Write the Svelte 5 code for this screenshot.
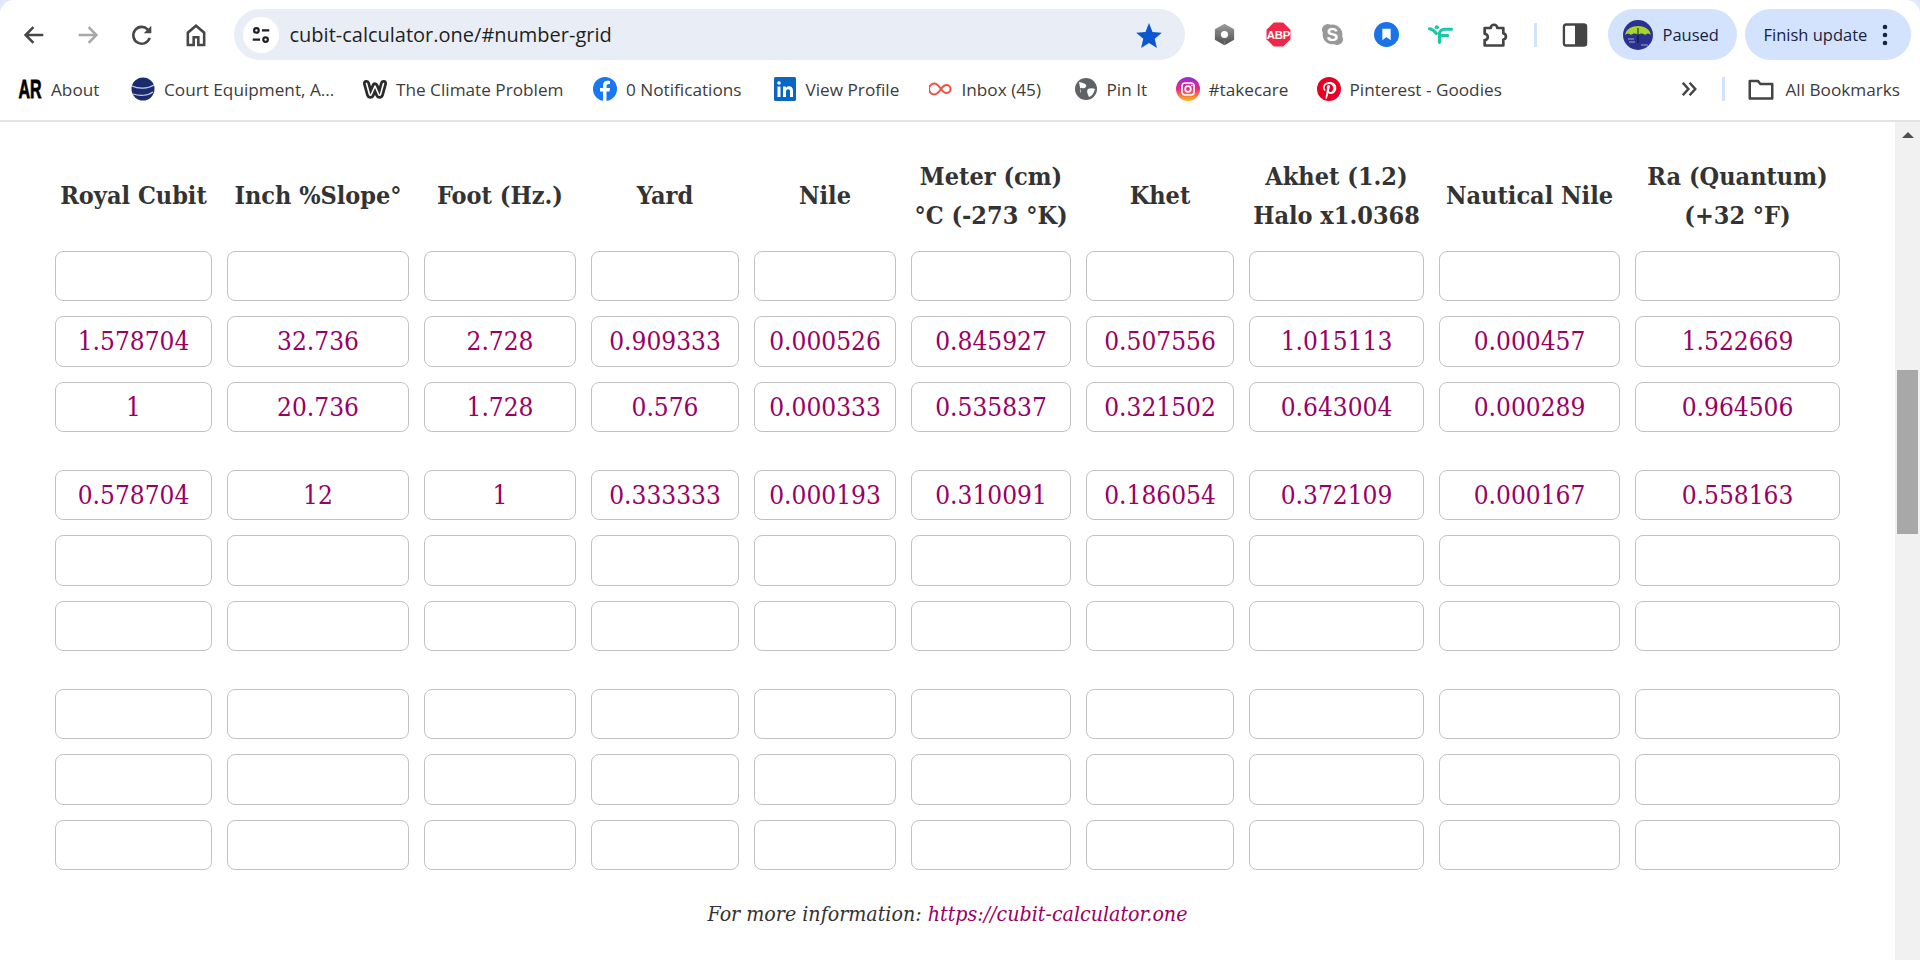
<script lang="ts">
  // fixed sizes of the number grid, taken from the table on the page
  const heads = [
    ['Royal Cubit'],
    ['Inch %Slope°'],
    ['Foot (Hz.)'],
    ['Yard'],
    ['Nile'],
    ['Meter (cm)', '°C (-273 °K)'],
    ['Khet'],
    ['Akhet (1.2)', 'Halo x1.0368'],
    ['Nautical Nile'],
    ['Ra (Quantum)', '(+32 °F)']
  ]
  const empty = Array(10).fill('')
  const rows = [
    { cells: empty },
    { cells: ['1.578704', '32.736', '2.728', '0.909333', '0.000526', '0.845927', '0.507556', '1.015113', '0.000457', '1.522669'] },
    { cells: ['1', '20.736', '1.728', '0.576', '0.000333', '0.535837', '0.321502', '0.643004', '0.000289', '0.964506'], sep: true },
    { cells: ['0.578704', '12', '1', '0.333333', '0.000193', '0.310091', '0.186054', '0.372109', '0.000167', '0.558163'] },
    { cells: empty },
    { cells: empty, sep: true },
    { cells: empty },
    { cells: empty },
    { cells: empty }
  ]
  const marks = [
    { name: 'About', w: 113 },
    { name: 'Court Equipment, A...', w: 232 },
    { name: 'The Climate Problem', w: 230 },
    { name: '0 Notifications', w: 179.5 },
    { name: 'View Profile', w: 156 },
    { name: 'Inbox (45)', w: 145 },
    { name: 'Pin It', w: 102 },
    { name: '#takecare', w: 141 },
    { name: 'Pinterest - Goodies', w: 189 }
  ]
</script>

<div class="browser">
  <header class="chrome">
    <div class="toolbar">
      <div class="nav">
        <svg viewBox="0 0 24 24" class="ic"><path d="M20 12H5M11.5 5.2 4.8 12l6.7 6.8" fill="none" stroke="#474747" stroke-width="2.2"/></svg>
        <svg viewBox="0 0 24 24" class="ic"><path d="M4 12h15M12.5 5.2l6.7 6.8-6.7 6.8" fill="none" stroke="#a8a8a8" stroke-width="2.2"/></svg>
        <svg viewBox="0 0 24 24" class="ic"><path d="M18.6 14.500A7.200 7.200 0 1 1 17 7.300L19 9.500" fill="none" stroke="#474747" stroke-width="2.200"/><path d="M20 4v6.500h-6.500z" fill="#474747"/></svg>
        <svg viewBox="0 0 24 24" class="ic"><path d="M5 20.500V10l7-6 7 6v10.500h-5v-6.500h-4v6.500z" fill="none" stroke="#474747" stroke-width="2.200"/></svg>
      </div>
      <div class="omnibox">
        <span class="tune">
          <svg viewBox="0 0 24 24" width="22" height="22"><g fill="none" stroke="#1f1f1f" stroke-width="2.400"><circle cx="7" cy="7" r="2.500"/><path d="M13 7h8M3 17h8"/><circle cx="17" cy="17" r="2.500"/></g></svg>
        </span>
        <span class="url">cubit-calculator.one/#number-grid</span>
        <svg class="star" viewBox="0 0 24 24" width="28" height="28"><path d="M12 1.800l3 7.600 8 .6-6.100 5.200 1.900 7.900L12 18.800l-6.800 4.300 1.900-7.900L1 10l8-.6z" fill="#0b57d0"/></svg>
      </div>
      <div class="exts">
        <svg viewBox="0 0 24 24" class="ext">
          <defs><linearGradient id="hexg" x1="0" y1="0" x2="0" y2="1"><stop offset="0" stop-color="#9a9a9a"/><stop offset="1" stop-color="#4f4f4f"/></linearGradient></defs>
          <path d="M12 2.500l8.500 4.800v9.400L12 21.500l-8.500-4.800V7.300z" fill="url(#hexg)" stroke="url(#hexg)" stroke-width="1.500" stroke-linejoin="round"/>
          <path d="M4 8l5 3M12 18v4" stroke="#7a7a7a" stroke-width="1.500"/>
          <circle cx="12" cy="12" r="3.400" fill="#fff"/>
        </svg>
        <svg viewBox="0 0 24 24" class="ext"><path d="M7.500 .5h9l7 7v9l-7 7h-9l-7-7v-9z" fill="#f0264a"/><text x="12" y="16" class="abp">ABP</text></svg>
        <svg viewBox="0 0 24 24" class="ext"><path d="M12 2.500a9.500 9.500 0 0 1 9.300 11.300 5.500 5.500 0 0 1-7.500 7.500A9.500 9.500 0 0 1 2.700 10.200 5.500 5.500 0 0 1 10.200 2.700z" fill="#999"/><text x="12" y="18" class="skype">S</text></svg>
        <svg viewBox="0 0 24 24" class="ext"><circle cx="12" cy="12" r="12" fill="#1a73e8"/><path d="M8 6.500h8v11l-4-3-4 3z" fill="#fff"/></svg>
        <svg viewBox="0 0 24 24" class="ext"><g fill="none" stroke="#17c9a5" stroke-width="3" stroke-linecap="round"><path d="M1.500 6.500c3 .5 5 2.500 6.500 4.500M11 19.500V12c0-3 2-5 5-5h6.500M13 13h6"/></g><circle cx="8.500" cy="5" r="2" fill="#17c9a5"/></svg>
        <svg viewBox="0 0 24 24" class="ext puzzle"><path d="M4 6h5.200a2.800 2.800 0 0 1 5.600 0H20v4.600a2.700 2.700 0 0 1 0 5.300V21H4v-4.600a2.700 2.700 0 0 0 0-5.400z" fill="none" stroke="#444" stroke-width="2.300" stroke-linejoin="round"/></svg>
      </div>
      <i class="bar"></i>
      <svg viewBox="0 0 24 24" class="panel"><rect x="2.500" y="3" width="19" height="18" rx="2" fill="none" stroke="#444" stroke-width="2"/><rect x="12" y="3" width="10" height="18" fill="#444"/></svg>
      <div class="pill paused">
        <svg viewBox="0 0 30 30" width="30" height="30" class="avatar">
          <circle cx="15" cy="15" r="15" fill="#2b3190"/>
          <path d="M2 15C4 3 26 3 28 15c-2-2-4-2-6 0-2-2-5-2-7 0-2-2-5-2-7 0-2-2-4-2-6 0z" fill="#a8d52c"/>
          <path d="M15 8v15" stroke="#111" stroke-width="1"/>
          <path d="M5 19h6M6 22h6M18 25h7" stroke="#aab" stroke-width="1"/>
        </svg>
        <span>Paused</span>
      </div>
      <div class="pill update">
        <span>Finish update</span>
        <svg viewBox="0 0 6 24" width="6" height="24"><circle cx="3" cy="4" r="2.300" fill="#17233f"/><circle cx="3" cy="12" r="2.300" fill="#17233f"/><circle cx="3" cy="20" r="2.300" fill="#17233f"/></svg>
      </div>
    </div>
    <div class="bookmarks">
      {#each marks as m, i}
        <span class="mark" style="width:{m.w}px">
          <svg viewBox="0 0 24 24" width="24" height="24">
            {#if i === 0}
              <text class="ar" transform="translate(.5 20.500) scale(.8 1.300)">AR</text>
            {:else if i === 1}
              <circle cx="12" cy="12" r="11.500" fill="#1c2a6e"/><path d="M1 9c6 3 16 3 22-1M2 17c6 2 15 2 20-2" stroke="#c6cde8" fill="none" stroke-width="1.200"/>
            {:else if i === 2}
              <g fill="none" stroke-linecap="round" stroke-linejoin="round"><path d="M3.500 6.500l3 11c.4 1 1.400 1 1.800 0L12 9l3.700 8.500c.4 1 1.400 1 1.800 0l3-11" stroke="#2b2b2b" stroke-width="7"/><path d="M3.500 6.500l3 11c.4 1 1.400 1 1.800 0L12 9l3.700 8.500c.4 1 1.400 1 1.800 0l3-11" stroke="#fff" stroke-width="1.600"/></g>
            {:else if i === 3}
              <circle cx="12" cy="12" r="12" fill="#1877f2"/><path d="M13.500 24v-9.500h3l.5-3.500h-3.500V9c0-1 .5-2 2-2H17V4c-3.500-.6-7 0-7 4.500V11H7v3.500h3V24z" fill="#fff"/>
            {:else if i === 4}
              <rect x="1" y="0" width="22" height="24" rx="1.500" fill="#0a66c2"/><path d="M4.500 9.500h3V20h-3zM10 9.500h3V11c1.500-2.500 7-2.500 7 2.500V20h-3v-6c0-2.500-4-2.500-4 .5V20h-3z" fill="#fff"/><circle cx="6" cy="6" r="1.800" fill="#fff"/>
            {:else if i === 5}
              <path d="M12 12c-2.500-3.500-4.500-5.500-6.500-5.500a5.500 5.500 0 0 0 0 11C7.500 17.500 9.500 15.500 12 12c2-2.800 3.500-4 5.500-4a4 4 0 0 1 0 8c-2 0-3.500-1.200-5.500-4z" fill="none" stroke="#f0503c" stroke-width="2"/>
            {:else if i === 6}
              <circle cx="12" cy="12" r="11" fill="#5f6368"/><path d="M5 5c3 1 6 1 7 3s-2 4-4 3-3 3-1 5M14 12c2-1 5-1 7 0-1 4-3 7-6 8-1-3-3-5-1-8z" fill="#fff"/>
            {:else if i === 7}
              <rect x="0" y="0" width="24" height="24" rx="12" fill="url(#insta)"/><rect x="6" y="6" width="12" height="12" rx="3" fill="none" stroke="#fff" stroke-width="1.700"/><circle cx="12" cy="12" r="2.800" fill="none" stroke="#fff" stroke-width="1.700"/><circle cx="15.700" cy="8.300" r=".9" fill="#fff"/>
              <defs><linearGradient id="insta" x1="0" y1="0" x2="0" y2="1"><stop offset="0" stop-color="#8a2fe0"/><stop offset=".5" stop-color="#ee2a7b"/><stop offset="1" stop-color="#fdb913"/></linearGradient></defs>
            {:else}
              <circle cx="12" cy="12" r="12" fill="#e60023"/><path d="M12.500 5c-4 0-6.500 2.500-6.500 5.500 0 1.500.8 3 2 3.500.5-.5.5-1 .3-1.500-1.600-2.500.2-5.500 3.800-5.500 5.500 0 5 8 1.400 8-1 0-1.800-.8-1.500-1.800l1-3.500c.3-2-2.800-2.400-3.200.6-.1.800.2 1.400.2 1.400L8.800 19c-.2 1-.1 2.500 0 3.500 1-1 1.600-2.500 2-4l.6-2.500c1.500 2 6.600 1.500 7.800-3.500C20 7.500 17 5 12.500 5z" fill="#fff"/>
            {/if}
          </svg>
          <span>{m.name}</span>
        </span>
      {/each}
      <svg viewBox="0 0 16 16" width="20" height="20" class="more"><path d="M3 3l4.500 5L3 13M8.500 3l4.500 5-4.500 5" fill="none" stroke="#444" stroke-width="2"/></svg>
      <i class="bar small"></i>
      <span class="all">
        <svg viewBox="0 0 24 24" width="30" height="30"><path d="M3 5.500h6.500l2 2.500H21v11.500H3z" fill="none" stroke="#444" stroke-width="2" stroke-linejoin="round"/></svg>
        <span>All Bookmarks</span>
      </span>
    </div>
  </header>

  <div class="viewport">
    <main>
      <div class="row heads">
        {#each heads as h}
          <div class="head">
            {#each h as line}<div>{line}</div>{/each}
          </div>
        {/each}
      </div>
      {#each rows as r}
        <div class="row" class:sep={r.sep}>
          {#each r.cells as c}
            <input type="text" value={c} />
          {/each}
        </div>
      {/each}
      <p class="info">For more information: <a href="#number-grid">https://cubit-calculator.one</a></p>
    </main>
    <aside class="scroll">
      <svg viewBox="0 0 12 6" width="12" height="6" class="up"><path d="M6 0l6 6H0z" fill="#505050"/></svg>
      <div class="thumb"></div>
    </aside>
  </div>
</div>

<style>
  :global(body) { margin: 0; background: #dfe9fb; overflow: hidden; }
  .browser { width: 1920px; height: 960px; display: flex; flex-direction: column; font-family: "Open Sans", "Noto Sans", sans-serif; }
  .chrome { background: #fff; border-radius: 14px 14px 0 0; border-bottom: 2px solid #e3e3e3; height: 120px; flex: none; }
  .toolbar { height: 69px; display: flex; align-items: center; padding-left: 20px; }
  .nav { display: flex; gap: 26px; width: 214px; flex: none; }
  .ic { width: 28px; height: 28px; }
  .omnibox { width: 951px; height: 51px; border-radius: 26px; background: #e9eef6; display: flex; align-items: center; flex: none; padding-left: 9px; box-sizing: border-box; }
  .tune { width: 36px; height: 36px; border-radius: 50%; background: #fff; display: flex; align-items: center; justify-content: center; }
  .url { font-size: 20px; color: #1f1f1f; margin-left: 10.500px; flex: 1; }
  .star { margin-right: 22px; }
  .exts { display: flex; gap: 29px; margin-left: 26.500px; align-items: center; }
  .ext { width: 25px; height: 25px; }
  .puzzle { width: 28px; height: 28px; margin: 0 -1.500px; }
  .abp { font: 700 11px "Liberation Sans", sans-serif; letter-spacing: -.2px; fill: #fff; text-anchor: middle; }
  .skype { font: 700 17px "Liberation Sans", sans-serif; fill: #fff; text-anchor: middle; }
  .bar { width: 3px; height: 24px; background: #d3e3fd; margin-left: 27px; flex: none; }
  .panel { width: 28px; height: 28px; margin-left: 24.500px; }
  .pill { height: 51px; border-radius: 26px; background: #d3e3fd; display: flex; align-items: center; box-sizing: border-box; font-size: 16.500px; color: #17233f; flex: none; }
  .paused { width: 129px; margin-left: 18.500px; padding-left: 15px; gap: 10px; }
  .avatar { flex: none; }
  .update { width: 166px; margin-left: 8px; padding-left: 19px; gap: 15px; }
  .bookmarks { height: 40px; display: flex; align-items: center; padding-left: 18px; font-size: 17.200px; color: #3c3c3c; }
  .mark { display: flex; align-items: center; gap: 9px; flex: none; }
  .ar { font: 700 20px "Liberation Sans", sans-serif; fill: #000; stroke: #000; stroke-width: .6px; }
  .more { margin-left: 173px; flex: none; }
  .bar.small { margin-left: 23px; }
  .all { display: flex; align-items: center; gap: 10px; margin-left: 21px; }
  .viewport { flex: 1; background: #fff; display: flex; min-height: 0; }
  main { width: 1895px; flex: none; padding: 27.600px 0 0 55px; box-sizing: border-box; font-family: "DejaVu Serif Condensed", "DejaVu Serif", serif; }
  .row { display: grid; grid-template-columns: 157px 182px 152px 148px 142px 160px 148px 175px 181px 205px; column-gap: 15px; margin-bottom: 15px; }
  .row.sep { margin-bottom: 37.500px; }
  .row.heads { height: 101px; box-sizing: border-box; padding-bottom: 9px; margin-bottom: 0; align-items: center; }
  .head { text-align: center; font-size: 25px; font-weight: 700; line-height: 39px; color: #333; white-space: nowrap; }
  input { width: 100%; height: 50.500px; box-sizing: border-box; border: 1px solid #c2c2c2; border-radius: 8px; padding: 0; margin: 0; background: #fff; text-align: center; font: 400 26px "DejaVu Serif Condensed", "DejaVu Serif", serif; color: #990066; outline: none; }
  .info { margin: 30.500px 0 0; text-align: center; font-size: 21.200px; font-style: italic; color: #333; padding-right: 55px; }
  .info a { color: #990066; text-decoration: none; }
  .scroll { width: 25px; background: #f1f1f1; position: relative; }
  .up { position: absolute; left: 7px; top: 10px; }
  .thumb { position: absolute; left: 2px; top: 248px; width: 21px; height: 164px; background: #a8a8a8; }
</style>
